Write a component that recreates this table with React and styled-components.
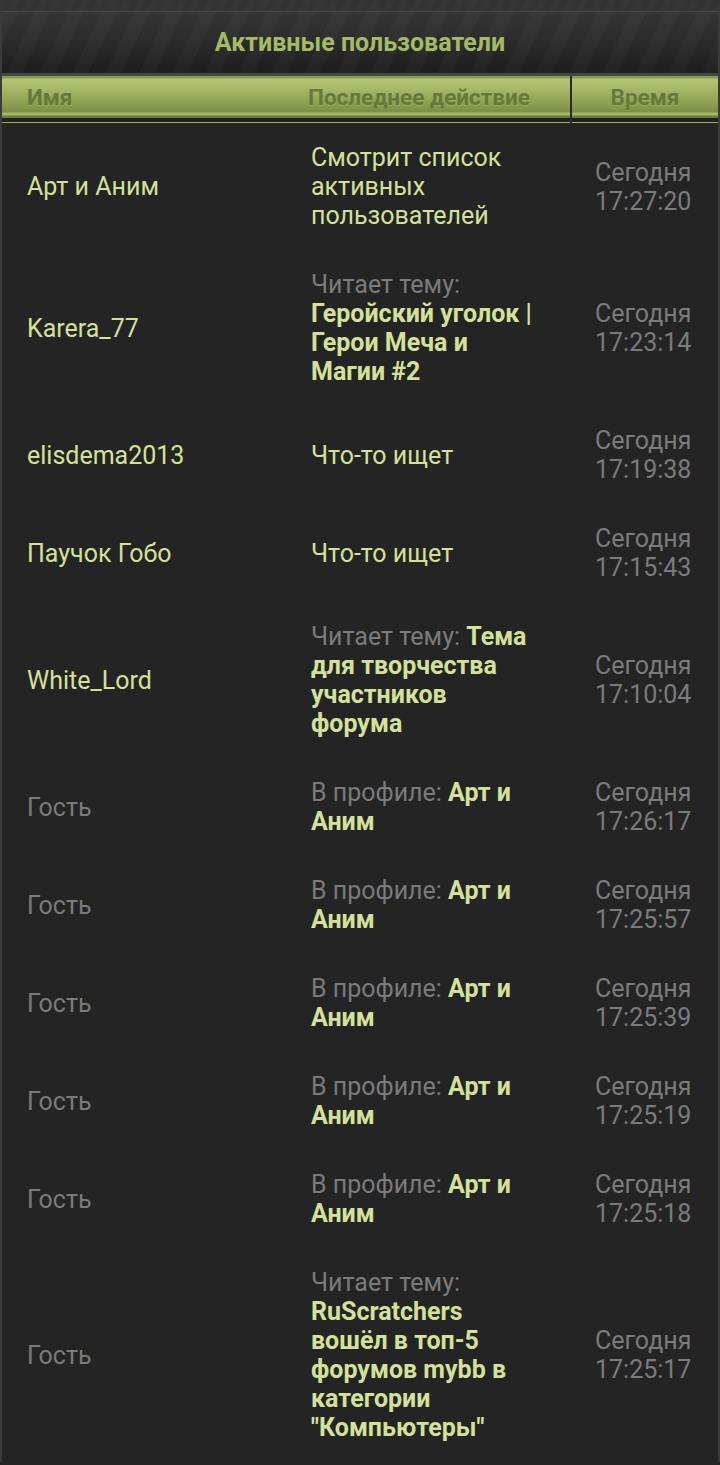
import React from "react";
import styled, { createGlobalStyle } from "styled-components";

const rows = [
  { name: "Арт и Аним", text: "Смотрит список активных пользователей", time: "17:27:20" },
  { name: "Karera_77", prefix: "Читает тему:", link: "Геройский уголок | Герои Меча и Магии #2", time: "17:23:14" },
  { name: "elisdema2013", text: "Что-то ищет", time: "17:19:38" },
  { name: "Паучок Гобо", text: "Что-то ищет", time: "17:15:43" },
  { name: "White_Lord", prefix: "Читает тему:", link: "Тема для творчества участников форума", time: "17:10:04" },
  { guest: true, prefix: "В профиле:", link: "Арт и Аним", time: "17:26:17" },
  { guest: true, prefix: "В профиле:", link: "Арт и Аним", time: "17:25:57" },
  { guest: true, prefix: "В профиле:", link: "Арт и Аним", time: "17:25:39" },
  { guest: true, prefix: "В профиле:", link: "Арт и Аним", time: "17:25:19" },
  { guest: true, prefix: "В профиле:", link: "Арт и Аним", time: "17:25:18" },
  {
    guest: true,
    prefix: "Читает тему:",
    link: 'RuScratchers вошёл в топ-5 форумов mybb в категории "Компьютеры"',
    time: "17:25:17",
  },
];

const GlobalStyle = createGlobalStyle`
  html, body {
    margin: 0;
    padding: 0;
    background: #242424;
    font-family: Roboto, "Noto Sans", sans-serif;
  }
`;

const Page = styled.div`
  padding-top: 11px;
  background: repeating-linear-gradient(
    120deg,
    #363636 0px,
    #363636 6px,
    #333333 6px,
    #333333 12px
  );
`;

const Panel = styled.section`
  border-top: 1px solid #4a4a4a;
  border-left: 2px solid #3b3b3b;
  border-right: 2px solid #3b3b3b;
  background: #242424;
`;

const TitleBar = styled.h2`
  margin: 0;
  height: 61px;
  display: flex;
  align-items: center;
  justify-content: center;
  font-size: 25px;
  font-weight: 700;
  color: #a4bb64;
  background:
    repeating-linear-gradient(
      115deg,
      rgba(255, 255, 255, 0.025) 0px,
      rgba(255, 255, 255, 0.025) 14px,
      rgba(0, 0, 0, 0) 14px,
      rgba(0, 0, 0, 0) 30px
    ),
    linear-gradient(to bottom, #343434 0%, #2c2c2c 45%, #1d1d1d 100%);
  border-bottom: 3px solid #464646;
`;

const Grid = styled.div`
  display: grid;
  grid-template-columns: 284px 284px 1fr;
`;

const HeaderCell = styled.div`
  height: 47px;
  box-sizing: border-box;
  padding: 0 0 5px ${({ $inset }) => $inset}px;
  display: flex;
  align-items: center;
  justify-content: ${({ $center }) => ($center ? "center" : "flex-start")};
  font-size: 22.5px;
  font-weight: 700;
  color: #66793a;
  text-shadow: 0 1px 0 rgba(200, 220, 140, 0.2);
  border-left: ${({ $divider }) => ($divider ? "2px solid #2a2a2e" : "none")};
  background: linear-gradient(
    to bottom,
    #8a9c53 0px,
    #8a9c53 2px,
    #b4c676 3px,
    #a8bb69 12px,
    #8b9e51 28px,
    #7b8e46 36px,
    #a4b867 37px,
    #a4b867 39px,
    #6a7c3b 40px,
    #6a7c3b 42px,
    #1f1f1f 42px,
    #1f1f1f 46px,
    #9db05c 46px,
    #9db05c 47px
  );
`;

const Cell = styled.div`
  box-sizing: border-box;
  padding: 20px ${({ $right }) => $right}px 20px 25px;
  display: flex;
  align-items: center;
  font-size: 25px;
  line-height: 29px;
  color: ${({ $muted }) => ($muted ? "#7b7b7b" : "#d4e199")};
`;

const ActionText = styled.div``;

const Prefix = styled.span`
  color: #7b7b7b;
`;

const TopicLink = styled.span`
  font-weight: 700;
  color: #d4e199;
`;

const Action = ({ row }) => {
  if (row.text) return <ActionText>{row.text}</ActionText>;
  return (
    <ActionText>
      <Prefix>{row.prefix}</Prefix> <TopicLink>{row.link}</TopicLink>
    </ActionText>
  );
};

export default function App() {
  return (
    <>
      <GlobalStyle />
      <Page>
        <Panel>
          <TitleBar>Активные пользователи</TitleBar>
          <Grid>
            <HeaderCell $inset={25}>Имя</HeaderCell>
            <HeaderCell $inset={22}>Последнее действие</HeaderCell>
            <HeaderCell $inset={0} $center $divider>
              Время
            </HeaderCell>
            {rows.map((row, i) => (
              <React.Fragment key={i}>
                <Cell $right={10} $muted={row.guest}>
                  {row.guest ? "Гость" : row.name}
                </Cell>
                <Cell $right={35}>
                  <Action row={row} />
                </Cell>
                <Cell $right={10} $muted>
                  Сегодня {row.time}
                </Cell>
              </React.Fragment>
            ))}
          </Grid>
        </Panel>
      </Page>
    </>
  );
}
